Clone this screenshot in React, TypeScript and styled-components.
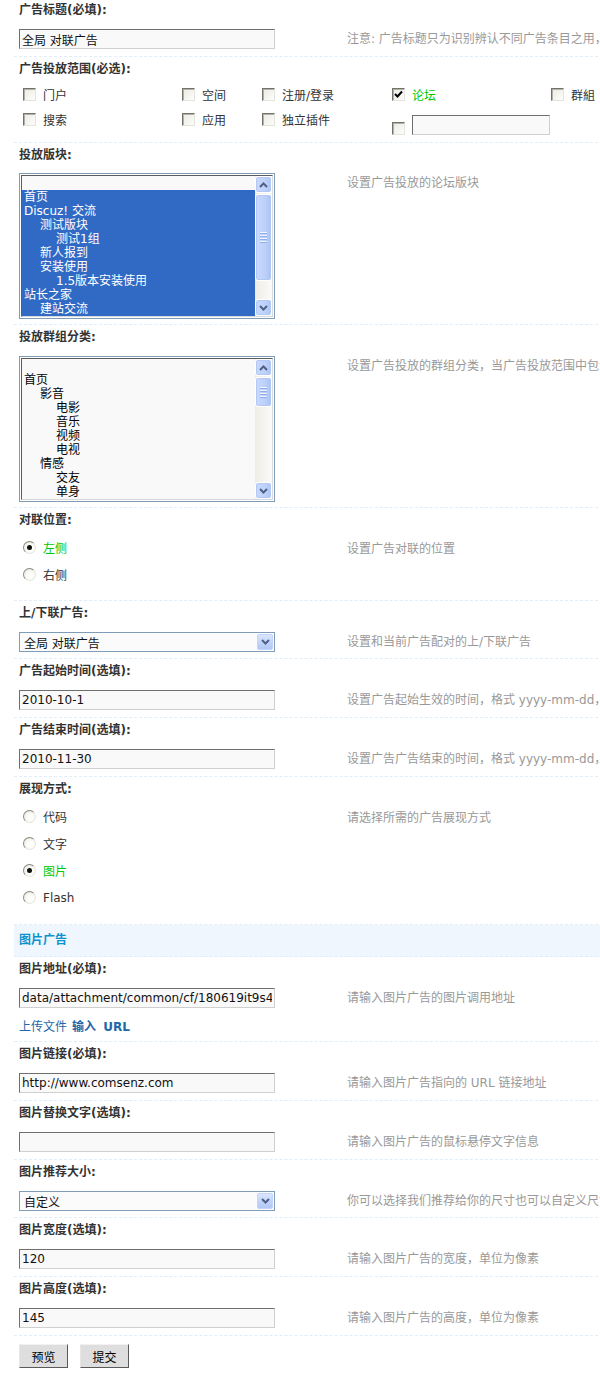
import React from "react";
import styled, { createGlobalStyle } from "styled-components";

const FONT = `"DejaVu Sans", "Noto Sans CJK SC", sans-serif`;

const GlobalStyle = createGlobalStyle`
  html, body {
    margin: 0;
    padding: 0;
    overflow: hidden;
    background: #fff;
  }
  body {
    font: 12px ${FONT};
    color: #333;
  }
`;

/* ---------- page frame ---------- */

const Form = styled.div`
  width: 1100px;
  margin-left: 14px;
`;

const LabelCell = styled.div<{ $first?: boolean }>`
  padding: ${(p) => (p.$first ? "1px" : "3px")} 5px 0;
  line-height: 18px;
  font-weight: bold;
  color: #333;
  white-space: nowrap;
`;

const ControlRow = styled.div<{ $pt: number; $pb: number; $full?: boolean }>`
  display: grid;
  grid-template-columns: ${(p) => (p.$full ? "1fr" : "333px 1fr")};
  padding: ${(p) => p.$pt}px 0 ${(p) => p.$pb}px;
  border-bottom: 1px dashed #deeffb;
`;

const ControlCell = styled.div`
  padding-left: 5px;
`;

const Tip = styled.div`
  line-height: 20px;
  color: #999;
  white-space: nowrap;
`;

const SectionHeader = styled.div`
  height: 31px;
  line-height: 31px;
  padding-left: 5px;
  background: #eff6fd;
  border-bottom: 1px dashed #deeffb;
  font-weight: bold;
  color: #0b93d0;
`;

const ButtonBar = styled.div`
  display: flex;
  gap: 12px;
  padding: 8px 0 0 5px;
`;

const Button = styled.button`
  box-sizing: border-box;
  width: 49px;
  height: 24px;
  margin: 0;
  padding: 0;
  background: #dedede;
  border: 1px solid;
  border-color: #f2f2f2 #5a5a5a #5a5a5a #e6e6e6;
  font: 12px ${FONT};
  color: #000;
`;

/* ---------- text fields ---------- */

const TextInput = styled.input<{ $w?: number }>`
  box-sizing: border-box;
  display: block;
  width: ${(p) => p.$w ?? 256}px;
  height: 20px;
  margin: 0;
  padding: 0 2px;
  border: 1px solid;
  border-color: #6f6f6f #cfcfcf #cfcfcf #6f6f6f;
  background: #f9f9f9;
  font: 12px ${FONT};
  color: #111;
  outline: none;
`;

const LinkRow = styled.div`
  margin-top: 10px;
  line-height: 18px;
  color: #2366a8;
  white-space: nowrap;
`;

const LinkText = styled.span<{ $bold?: boolean }>`
  font-weight: ${(p) => (p.$bold ? "bold" : "normal")};
  margin-left: ${(p) => (p.$bold ? "5px" : "0")};
  word-spacing: 3px;
`;

/* ---------- checkboxes & radios ---------- */

const CheckGrid = styled.div`
  display: grid;
  grid-template-columns: 159px 80px 130px 159px 80px;
  row-gap: 12px;
  align-items: start;
`;

const CheckItem = styled.label<{ $tall?: boolean }>`
  display: flex;
  align-items: ${(p) => (p.$tall ? "flex-end" : "center")};
  height: ${(p) => (p.$tall ? "20px" : "13px")};
  margin-top: ${(p) => (p.$tall ? "2px" : "0")};
  white-space: nowrap;
`;

const Box = styled.span`
  box-sizing: border-box;
  flex: none;
  width: 13px;
  height: 13px;
  margin: 0 7px 0 4px;
  border: 1px solid;
  border-color: #74736b #e4e3dc #e4e3dc #74736b;
  box-shadow: inset 1px 1px 0 #b3b1a6;
  background: linear-gradient(135deg, #ebeae3, #fdfdfb);
  display: flex;
  align-items: center;
  justify-content: center;
`;

const OptionText = styled.span<{ $on?: boolean }>`
  color: ${(p) => (p.$on ? "#00c800" : "#333")};
`;

const RadioList = styled.div`
  display: flex;
  flex-direction: column;
`;

const RadioRow = styled.label`
  display: flex;
  align-items: center;
  height: 17px;
  margin-bottom: 10px;
`;

const RadioDot = styled.span<{ $on?: boolean }>`
  box-sizing: border-box;
  flex: none;
  position: relative;
  width: 13px;
  height: 13px;
  margin: 0 7px 0 4px;
  border-radius: 50%;
  border: 1px solid;
  border-color: #8a897f #e6e5de #e6e5de #8a897f;
  background: radial-gradient(circle at 60% 60%, #fdfdfb 30%, #e6e5dd 100%);
  &::after {
    content: "";
    display: ${(p) => (p.$on ? "block" : "none")};
    position: absolute;
    left: 3px;
    top: 3px;
    width: 5px;
    height: 5px;
    border-radius: 50%;
    background: #111;
  }
`;

/* ---------- select box ---------- */

const SelectBox = styled.div`
  box-sizing: border-box;
  width: 256px;
  height: 20px;
  border: 1px solid #7f9db9;
  background: #fbfbfb;
  display: flex;
  align-items: center;
  justify-content: space-between;
  padding: 0 1px 0 4px;
  color: #111;
  white-space: nowrap;
`;

const DropButton = styled.span`
  box-sizing: border-box;
  width: 16px;
  height: 16px;
  border: 1px solid #c3d3fd;
  border-radius: 2px;
  background: linear-gradient(180deg, #dbe6fe 0%, #c1d3fb 55%, #b3c8f6 100%);
  display: flex;
  align-items: center;
  justify-content: center;
`;

/* ---------- list box ---------- */

const ListFrame = styled.div`
  box-sizing: border-box;
  width: 256px;
  height: 146px;
  border: 1px solid #7f9db9;
  padding: 1px;
  background: #fff;
`;

const ListInner = styled.div`
  box-sizing: border-box;
  height: 100%;
  border: 1px solid;
  border-color: #5d5d5d #d8d8d8 #d8d8d8 #5d5d5d;
  display: flex;
  overflow: hidden;
  background: #f9f9f9;
`;

const ListOptions = styled.div`
  flex: 1;
  overflow: hidden;
  padding-top: 14px;
`;

const ListOption = styled.div<{ $level: number; $selected?: boolean }>`
  height: 14px;
  line-height: 14px;
  padding-left: ${(p) => 2 + p.$level * 16}px;
  background: ${(p) => (p.$selected ? "#316ac5" : "transparent")};
  color: ${(p) => (p.$selected ? "#fff" : "#000")};
  white-space: nowrap;
`;

const ScrollBar = styled.div`
  width: 17px;
  flex: none;
  display: flex;
  flex-direction: column;
  background: linear-gradient(90deg, #eeede5, #fbfbf8);
`;

const ScrollButton = styled.div`
  box-sizing: border-box;
  height: 17px;
  border: 1px solid #fff;
  border-radius: 3px;
  background: linear-gradient(90deg, #c9d8fc 0%, #bfd1fa 60%, #aec4f3 100%);
  box-shadow: inset 0 0 0 1px #b4c8f5;
  display: flex;
  align-items: center;
  justify-content: center;
`;

const ScrollSpace = styled.div`
  flex: 1;
`;

const Thumb = styled.div<{ $h: number }>`
  box-sizing: border-box;
  height: ${(p) => p.$h}px;
  margin-top: 1px;
  border: 1px solid #fff;
  border-radius: 3px;
  background: linear-gradient(90deg, #cbdafd 0%, #bcd0fa 60%, #aac2f3 100%);
  box-shadow: inset 0 0 0 1px #b2c7f4;
  display: flex;
  flex-direction: column;
  align-items: center;
  justify-content: center;
  gap: 1px;
`;

const Grip = styled.span`
  width: 7px;
  height: 1px;
  background: #eef3fe;
  box-shadow: 0 1px 0 #8fadec;
  margin-bottom: 1px;
`;

/* ---------- small drawings ---------- */

const Chevron = ({ up }: { up?: boolean }) => (
  <svg width="9" height="6" viewBox="0 0 9 6">
    <polyline
      points={up ? "1,5 4.5,1.5 8,5" : "1,1 4.5,4.5 8,1"}
      fill="none"
      stroke="#4d6185"
      strokeWidth="2"
    />
  </svg>
);

const CheckMark = () => (
  <svg width="9" height="9" viewBox="0 0 9 9">
    <polyline points="1,4 3.5,6.5 8,1.5" fill="none" stroke="#000" strokeWidth="2" />
  </svg>
);

/* ---------- composed parts ---------- */

type FieldProps = {
  label: string;
  tip?: string;
  first?: boolean;
  full?: boolean;
  pt?: number;
  pb?: number;
  children: React.ReactNode;
};

const Field = ({ label, tip, first, full, pt = 10, pb = 7, children }: FieldProps) => (
  <>
    <LabelCell $first={first}>{label}</LabelCell>
    <ControlRow $pt={pt} $pb={pb} $full={full}>
      <ControlCell>{children}</ControlCell>
      {!full && <Tip>{tip}</Tip>}
    </ControlRow>
  </>
);

const Check = ({ text, checked }: { text: string; checked?: boolean }) => (
  <CheckItem>
    <Box>{checked && <CheckMark />}</Box>
    <OptionText $on={checked}>{text}</OptionText>
  </CheckItem>
);

const Radios = ({ items, value }: { items: string[]; value: string }) => (
  <RadioList>
    {items.map((it) => (
      <RadioRow key={it}>
        <RadioDot $on={it === value} />
        <OptionText $on={it === value}>{it}</OptionText>
      </RadioRow>
    ))}
  </RadioList>
);

const Select = ({ value }: { value: string }) => (
  <SelectBox>
    <span>{value}</span>
    <DropButton>
      <Chevron />
    </DropButton>
  </SelectBox>
);

type Opt = { t: string; l: number };

const ListBox = ({ items, selected, thumb }: { items: Opt[]; selected?: boolean; thumb: number }) => (
  <ListFrame>
    <ListInner>
      <ListOptions>
        {items.map((o, i) => (
          <ListOption key={i} $level={o.l} $selected={selected}>
            {o.t}
          </ListOption>
        ))}
      </ListOptions>
      <ScrollBar>
        <ScrollButton>
          <Chevron up />
        </ScrollButton>
        <Thumb $h={thumb}>
          <Grip />
          <Grip />
          <Grip />
          <Grip />
        </Thumb>
        <ScrollSpace />
        <ScrollButton>
          <Chevron />
        </ScrollButton>
      </ScrollBar>
    </ListInner>
  </ListFrame>
);

const forums: Opt[] = [
  { t: "首页", l: 0 },
  { t: "Discuz! 交流", l: 0 },
  { t: "测试版块", l: 1 },
  { t: "测试1组", l: 2 },
  { t: "新人报到", l: 1 },
  { t: "安装使用", l: 1 },
  { t: "1.5版本安装使用", l: 2 },
  { t: "站长之家", l: 0 },
  { t: "建站交流", l: 1 },
];

const groups: Opt[] = [
  { t: "首页", l: 0 },
  { t: "影音", l: 1 },
  { t: "电影", l: 2 },
  { t: "音乐", l: 2 },
  { t: "视频", l: 2 },
  { t: "电视", l: 2 },
  { t: "情感", l: 1 },
  { t: "交友", l: 2 },
  { t: "单身", l: 2 },
];

export default function App() {
  return (
    <>
      <GlobalStyle />
      <Form>
        <Field
          first
          label="广告标题(必填):"
          tip="注意: 广告标题只为识别辨认不同广告条目之用，并不在广告中显示"
        >
          <TextInput defaultValue="全局 对联广告" />
        </Field>

        <Field label="广告投放范围(必选):" full>
          <CheckGrid>
            <Check text="门户" />
            <Check text="空间" />
            <Check text="注册/登录" />
            <Check text="论坛" checked />
            <Check text="群組" />
            <Check text="搜索" />
            <Check text="应用" />
            <Check text="独立插件" />
            <CheckItem $tall>
              <Box />
              <TextInput $w={138} defaultValue="" />
            </CheckItem>
          </CheckGrid>
        </Field>

        <Field label="投放版块:" tip="设置广告投放的论坛版块" pt={9} pb={5}>
          <ListBox items={forums} selected thumb={87} />
        </Field>

        <Field
          label="投放群组分类:"
          tip="设置广告投放的群组分类，当广告投放范围中包含“群组”时有效"
          pt={10}
          pb={5}
        >
          <ListBox items={groups} thumb={30} />
        </Field>

        <Field label="对联位置:" tip="设置广告对联的位置">
          <Radios items={["左侧", "右侧"]} value="左侧" />
        </Field>

        <Field label="上/下联广告:" tip="设置和当前广告配对的上/下联广告" pb={6}>
          <Select value="全局 对联广告" />
        </Field>

        <Field
          label="广告起始时间(选填):"
          tip="设置广告起始生效的时间，格式  yyyy-mm-dd，留空为不限制起始时间"
        >
          <TextInput defaultValue="2010-10-1" />
        </Field>

        <Field
          label="广告结束时间(选填):"
          tip="设置广告广告结束的时间，格式  yyyy-mm-dd，留空为不限制结束时间"
        >
          <TextInput defaultValue="2010-11-30" />
        </Field>

        <Field label="展现方式:" tip="请选择所需的广告展现方式" pb={8}>
          <Radios items={["代码", "文字", "图片", "Flash"]} value="图片" />
        </Field>

        <SectionHeader>图片广告</SectionHeader>

        <Field label="图片地址(必填):" tip="请输入图片广告的图片调用地址" pb={5}>
          <TextInput defaultValue="data/attachment/common/cf/180619it9s4qa4s9qgs4qa.gif" />
          <LinkRow>
            <LinkText>上传文件</LinkText>
            <LinkText $bold>输入 URL</LinkText>
          </LinkRow>
        </Field>

        <Field label="图片链接(必填):" tip="请输入图片广告指向的 URL 链接地址">
          <TextInput defaultValue="http://www.comsenz.com" />
        </Field>

        <Field label="图片替换文字(选填):" tip="请输入图片广告的鼠标悬停文字信息">
          <TextInput defaultValue="" />
        </Field>

        <Field
          label="图片推荐大小:"
          tip="你可以选择我们推荐给你的尺寸也可以自定义尺寸"
          pb={6}
        >
          <Select value="自定义" />
        </Field>

        <Field label="图片宽度(选填):" tip="请输入图片广告的宽度，单位为像素">
          <TextInput defaultValue="120" />
        </Field>

        <Field label="图片高度(选填):" tip="请输入图片广告的高度，单位为像素">
          <TextInput defaultValue="145" />
        </Field>

        <ButtonBar>
          <Button type="button">预览</Button>
          <Button type="button">提交</Button>
        </ButtonBar>
      </Form>
    </>
  );
}
